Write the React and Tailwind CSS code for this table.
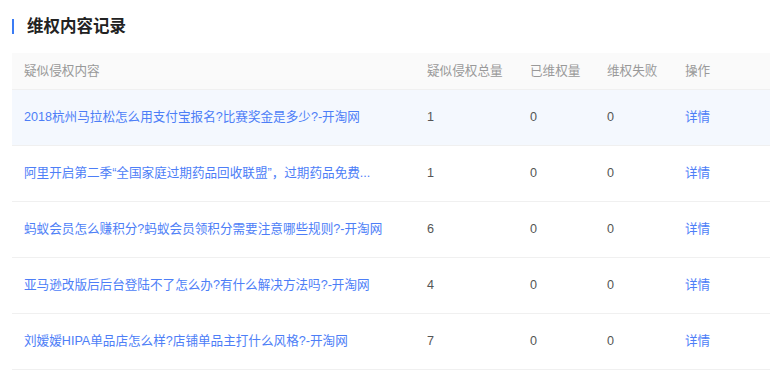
import React from 'react';

const rows = [
  { title: '2018杭州马拉松怎么用支付宝报名?比赛奖金是多少?-开淘网', total: 1, done: 0, failed: 0, active: true },
  { title: '阿里开启第二季“全国家庭过期药品回收联盟”，过期药品免费...', total: 1, done: 0, failed: 0 },
  { title: '蚂蚁会员怎么赚积分?蚂蚁会员领积分需要注意哪些规则?-开淘网', total: 6, done: 0, failed: 0 },
  { title: '亚马逊改版后后台登陆不了怎么办?有什么解决方法吗?-开淘网', total: 4, done: 0, failed: 0 },
  { title: '刘嫒嫒HIPA单品店怎么样?店铺单品主打什么风格?-开淘网', total: 7, done: 0, failed: 0 },
];

const cols = 'grid grid-cols-[403px_103px_77px_78px_1fr]';

export default function App() {
  return (
    <div
      className="w-[770px] h-[381px] overflow-hidden bg-white"
      style={{ fontFamily: '"Liberation Sans", "Noto Sans CJK SC", sans-serif' }}
    >
      <div className="flex items-center h-[52px] pl-3">
        <span className="w-[2px] h-[15px] bg-[#3b7cf5]" />
        <h2 className="ml-[13px] text-[16.5px] font-bold text-[#222] leading-none">维权内容记录</h2>
      </div>
      <div className="ml-3 mt-px">
        <div className={`${cols} h-[37px] items-center bg-[#fafafa] border-b border-[#f0f0f0] text-[12.6px] text-[#999]`}>
          <div className="pl-3">疑似侵权内容</div>
          <div className="pl-3">疑似侵权总量</div>
          <div className="pl-3">已维权量</div>
          <div className="pl-3">维权失败</div>
          <div className="pl-3">操作</div>
        </div>
        {rows.map((r, i) => (
          <div
            key={i}
            className={`${cols} h-[56px] items-center border-b border-[#f0f0f0] text-[12.6px] ${r.active ? 'bg-[#f4f8fe]' : 'bg-white'}`}
          >
            <div className="pl-3 text-[#4d7ef7] whitespace-nowrap">{r.title}</div>
            <div className="pl-3 text-[#555]">{r.total}</div>
            <div className="pl-3 text-[#555]">{r.done}</div>
            <div className="pl-3 text-[#555]">{r.failed}</div>
            <div className="pl-3 text-[#4d7ef7]">详情</div>
          </div>
        ))}
      </div>
    </div>
  );
}
